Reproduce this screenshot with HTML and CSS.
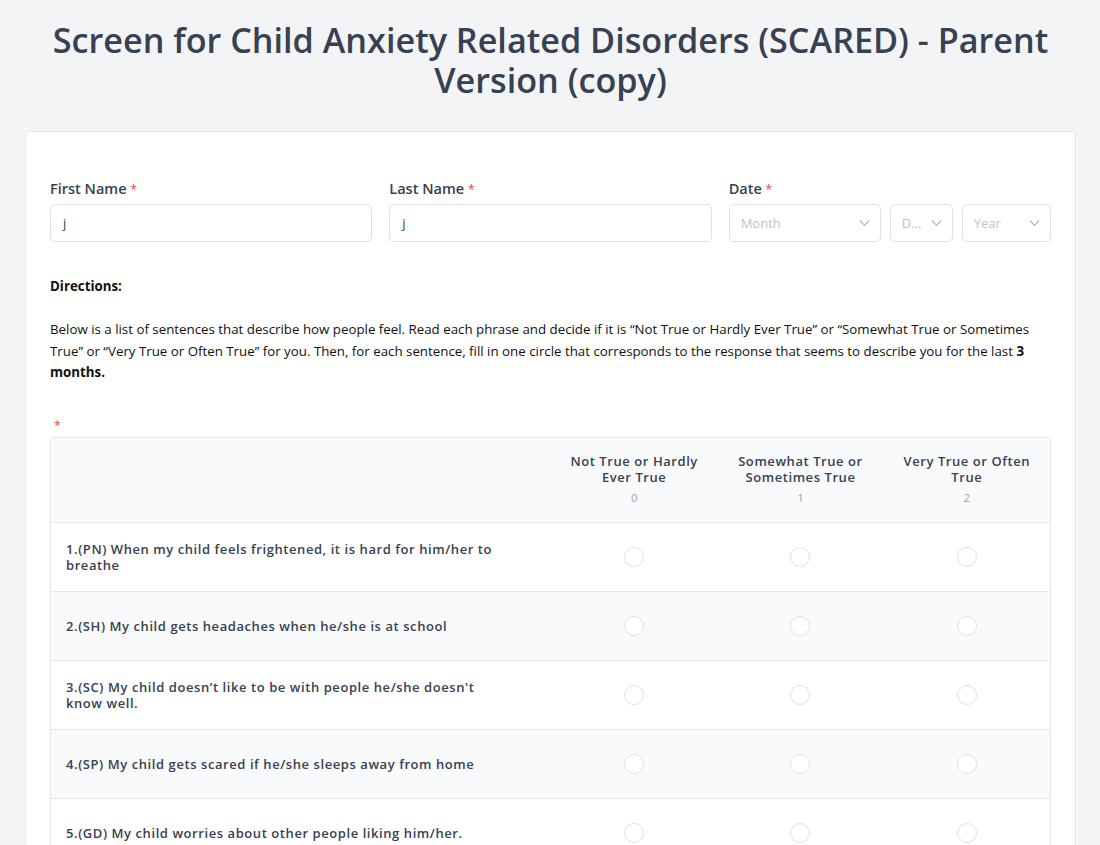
FILE: index.html
```html
<!DOCTYPE html>
<html lang="en">
<head>
<meta charset="utf-8">
<title>SCARED - Parent Version</title>
<link rel="stylesheet" href="styles.css">
</head>
<body>
<h1 class="title">Screen for Child Anxiety Related Disorders (SCARED) - Parent Version (copy)</h1>
<main class="card">
  <div class="fields">
    <div class="field">
      <label class="label">First Name <span class="req">*</span></label>
      <div class="input">j</div>
    </div>
    <div class="field">
      <label class="label">Last Name <span class="req">*</span></label>
      <div class="input">j</div>
    </div>
    <div class="field">
      <label class="label">Date <span class="req">*</span></label>
      <div class="date">
        <div class="select month"><span>Month</span><svg viewBox="0 0 12 8" class="chev"><path d="M1 1.5l5 5 5-5" fill="none" stroke="currentColor" stroke-width="1.2"/></svg></div>
        <div class="select day"><span>D...</span><svg viewBox="0 0 12 8" class="chev"><path d="M1 1.5l5 5 5-5" fill="none" stroke="currentColor" stroke-width="1.2"/></svg></div>
        <div class="select year"><span>Year</span><svg viewBox="0 0 12 8" class="chev"><path d="M1 1.5l5 5 5-5" fill="none" stroke="currentColor" stroke-width="1.2"/></svg></div>
      </div>
    </div>
  </div>

  <div class="directions">
    <p class="dir-title">Directions:</p>
    <p class="dir-text">Below is a list of sentences that describe how people feel. Read each phrase and decide if it is “Not True or Hardly Ever True” or “Somewhat True or Sometimes True” or “Very True or Often True” for you. Then, for each sentence, fill in one circle that corresponds to the response that seems to describe you for the last <b>3 months.</b></p>
  </div>

  <div class="req req-line">*</div>

  <div class="matrix">
    <div class="row head">
      <div class="q"></div>
      <div class="opt"><div class="opt-label">Not True or Hardly Ever True</div><div class="opt-val">0</div></div>
      <div class="opt"><div class="opt-label">Somewhat True or Sometimes True</div><div class="opt-val">1</div></div>
      <div class="opt"><div class="opt-label">Very True or Often True</div><div class="opt-val">2</div></div>
    </div>
    <div class="row">
      <div class="q">1.(PN) When my child feels frightened, it is hard for him/her to breathe</div>
      <div class="cell"><span class="radio"></span></div>
      <div class="cell"><span class="radio"></span></div>
      <div class="cell"><span class="radio"></span></div>
    </div>
    <div class="row alt">
      <div class="q">2.(SH) My child gets headaches when he/she is at school</div>
      <div class="cell"><span class="radio"></span></div>
      <div class="cell"><span class="radio"></span></div>
      <div class="cell"><span class="radio"></span></div>
    </div>
    <div class="row">
      <div class="q">3.(SC) My child doesn’t like to be with people he/she doesn't know well.</div>
      <div class="cell"><span class="radio"></span></div>
      <div class="cell"><span class="radio"></span></div>
      <div class="cell"><span class="radio"></span></div>
    </div>
    <div class="row alt">
      <div class="q">4.(SP) My child gets scared if he/she sleeps away from home</div>
      <div class="cell"><span class="radio"></span></div>
      <div class="cell"><span class="radio"></span></div>
      <div class="cell"><span class="radio"></span></div>
    </div>
    <div class="row">
      <div class="q">5.(GD) My child worries about other people liking him/her.</div>
      <div class="cell"><span class="radio"></span></div>
      <div class="cell"><span class="radio"></span></div>
      <div class="cell"><span class="radio"></span></div>
    </div>
  </div>
</main>
</body>
</html>
```

FILE: styles.css
```css
* { box-sizing: border-box; }
html, body { margin: 0; }
body {
  background: #f3f4f6;
  font-family: "Open Sans", "Noto Sans", sans-serif;
  color: #374151;
  padding: 20px 24px 0 25px;
}
.title {
  margin: 0 0 31px;
  text-align: center;
  font-size: 34.2px;
  line-height: 40px;
  font-weight: 600;
  color: #374151;
  padding: 0 10px;
}
.card {
  background: #fff;
  border: 1px solid #e5e7eb;
  border-radius: 4px;
  padding: 47px 24px 40px 24px;
}
.fields {
  display: grid;
  grid-template-columns: repeat(3, minmax(0, 1fr));
  gap: 17px;
}
.field { display: flex; flex-direction: column; min-width: 0; }
.label {
  font-size: 14.5px;
  font-weight: 600;
  color: #374151;
  line-height: 20px;
  margin-bottom: 4px;
}
.req { color: #ef4444; font-size: 12px; font-weight: 400; }
.input {
  height: 38px;
  border: 1px solid #dfe1e6;
  border-radius: 5px;
  padding: 0 12px;
  display: flex;
  align-items: center;
  font-size: 13px;
  color: #374151;
}
.date { display: flex; gap: 9px; }
.select {
  height: 38px;
  border: 1px solid #dfe1e6;
  border-radius: 5px;
  padding: 0 10px 0 11px;
  display: flex;
  align-items: center;
  justify-content: space-between;
  font-size: 13px;
  color: #c0c4cb;
  flex: none;
}
.month { width: 152px; }
.day { width: 63px; }
.year { width: 89px; }
.chev { width: 11px; height: 8px; color: #a3a8b0; flex: none; }

.directions { margin-top: 34px; font-size: 13.3px; color: #111; }
.directions p { margin: 0; }
.dir-title { font-weight: 700; line-height: 20px; }
.dir-text { margin-top: 23px !important; line-height: 21.5px; }
.dir-text b { font-weight: 700; }

.req-line { margin: 35px 0 0 4px; line-height: 14px; height: 18px; }

.matrix {
  border: 1px solid #e5e7eb;
  border-radius: 4px;
  overflow: hidden;
}
.row {
  display: grid;
  grid-template-columns: 500px 1fr 1fr 1fr;
  min-height: 69px;
  border-top: 1px solid #e5e7eb;
  align-items: center;
  font-size: 13px;
  font-weight: 600;
  letter-spacing: 0.57px;
  color: #374151;
}
.row.head { border-top: none; background: #f9fafb; min-height: 84px; }
.row.alt { background: #f9fafb; }
.q { padding: 0 48px 0 15px; line-height: 16px; }
.opt { text-align: center; padding: 0 12px; }
.opt-label { line-height: 16px; }
.opt-val { font-size: 11.5px; font-weight: 400; color: #9ca3af; margin-top: 5px; line-height: 16px; letter-spacing: 0; }
.cell { display: flex; justify-content: center; }
.radio {
  width: 20px;
  height: 20px;
  border: 1px solid #dfe1e6;
  border-radius: 50%;
  background: #fff;
}
```
